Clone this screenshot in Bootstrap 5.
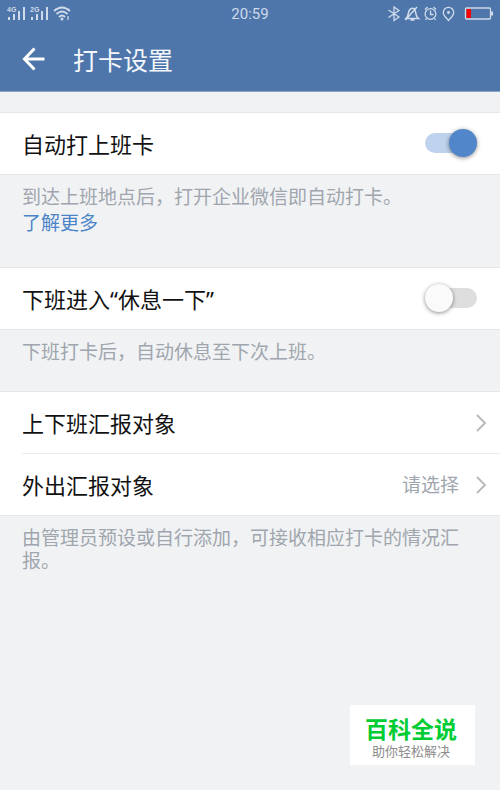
<!DOCTYPE html>
<html lang="zh-CN">
<head>
<meta charset="utf-8">
<meta name="viewport" content="width=device-width, initial-scale=1">
<title>打卡设置</title>
<link href="https://cdn.jsdelivr.net/npm/bootstrap@5.3.0/dist/css/bootstrap.min.css" rel="stylesheet">
<style>
body{background:#f1f2f4;font-family:"Noto Sans","Noto Sans CJK SC",sans-serif;color:#111;min-height:100vh}
.top-area{background:#4e76aa;border-bottom:1px solid #8ba4c6;color:#f4f7fb}
.status{height:26px;padding:0 6px;color:#cfdaea;font-family:Roboto,sans-serif;font-size:15px;line-height:28px}
.title-bar{height:65px;padding:0 22px;gap:26px}
.title-bar h1{font-size:25px;line-height:36px;font-weight:400;padding-top:2px}
.group{background:#fff;border:solid #e6e7e9;border-width:1px 0}
.setting{height:61px;padding:0 23px 0 22px;font-size:22px;line-height:32px;color:#111;text-decoration:none}
.setting-line{height:1px;background:#ececee;margin-left:22px}
.nav-row{padding-right:13px}
.hint{font-size:19px;line-height:23px;color:#a0a6ae;padding:11px 26px 0 22px}
.hint a{color:#4a84c8;line-height:29px;text-decoration:none}
.choice{font-size:19px;line-height:28px;color:#a0a6ae}
.toggle.form-check-input{width:52px;height:20px;margin:0 0 2px;border:0;border-radius:10px;background:#dedede none;position:relative}
.toggle.form-check-input:checked{background:#bfd3ee none}
.toggle::before{content:"";position:absolute;left:0;top:-4px;width:28px;height:28px;border-radius:50%;background:#fafafa;box-shadow:0 1px 4px rgba(0,0,0,.45)}
.toggle:checked::before{left:24px;background:#5186cb}
.gap-first{height:20px}
.block-a{height:92px}
.block-b{height:61px}
.brand-tag{right:25px;bottom:25px;width:125px;height:60px;background:#fff;padding-top:11px;padding-right:3px;font-family:"Liberation Sans","Noto Sans CJK SC",sans-serif}
.brand-name{font-size:23px;line-height:28px;font-weight:700;color:#0c3}
.brand-sub{font-size:13px;line-height:16px;color:#8c8c8c}
</style>
<script src="https://cdn.jsdelivr.net/npm/bootstrap@5.3.0/dist/js/bootstrap.bundle.min.js"></script>
</head>
<body class="position-relative">
<header class="top-area">
  <div class="status row g-0 align-items-center">
    <div class="col d-flex">
      <svg width="66" height="18" viewBox="0 0 66 18" fill="currentColor" aria-hidden="true">
        <text x="1" y="7" font-size="7" font-weight="700" font-family="Liberation Sans, sans-serif">4G</text>
        <text x="24" y="7" font-size="7" font-weight="700" font-family="Liberation Sans, sans-serif">2G</text>
        <path d="M2 12h2v3H2zM7 9h2v6H7zM12 6h2v9h-2zM17 2h2v13h-2zM25 12h2v3h-2zM30 9h2v6h-2zM35 6h2v9h-2zM40 2h2v13h-2z"/>
        <path d="M48 6Q56 -1 64 6M50.500 9Q56 4 61.500 9M53 12Q56 9 59 12" fill="none" stroke="currentColor" stroke-width="1.800"/>
        <circle cx="56" cy="14" r="1.500"/><path d="M61 11h2v4h-2z" opacity=".6"/>
      </svg>
    </div>
    <div class="col-auto">20:59</div>
    <div class="col d-flex justify-content-end">
      <svg width="108" height="18" viewBox="386 4 108 18" fill="none" stroke="currentColor" stroke-width="1.300" aria-hidden="true">
        <path d="M388.500 9l10.500 7-5 3.500V6l5 3.500-10.500 7"/>
        <path d="M406 17.500c2.500-2 2-6 3.500-8.500 1.500-2.500 4.500-2.500 5.500 0 1 2.500.5 6.500 3.500 8.500zM410.500 19h4M405.500 19L417 6" stroke-width="1.500"/>
        <circle cx="430.500" cy="13" r="5.400"/><path d="M430.500 9.500V13.500h3M425 8.500l2.500-2.500M436 8.500l-2.500-2.500M426.500 17.500l-1 1.500M434.500 17.500l1 1.500"/>
        <path d="M448.500 19.500c-2-2.500-5.200-4.500-5.200-8a5.200 5.200 0 0 1 10.400 0c0 3.500-3.200 5.500-5.200 8z"/><circle cx="448.500" cy="11.500" r=".8" fill="currentColor"/>
        <rect x="465.500" y="7" width="25" height="11" rx="1"/><path d="M491 10.500h2v4h-2" fill="currentColor" stroke="none"/>
        <path d="M466.500 8h4.500v9h-4.500z" fill="#f00" stroke="none"/>
      </svg>
    </div>
  </div>
  <div class="title-bar d-flex align-items-center">
    <button type="button" class="btn p-0 border-0 d-flex text-white" aria-label="返回">
      <svg width="25" height="24" viewBox="0 0 25 24" fill="none" stroke="currentColor" stroke-width="3" aria-hidden="true"><path d="M12.500 1.500L2.500 12l10 10.500M2.500 12h20"/></svg>
    </button>
    <h1 class="mb-0">打卡设置</h1>
  </div>
</header>
<main>
  <div class="gap-first"></div>
  <section class="group">
    <div class="setting d-flex align-items-center justify-content-between">
      <label for="auto-clock">自动打上班卡</label>
      <input class="form-check-input toggle" type="checkbox" role="switch" id="auto-clock" checked>
    </div>
  </section>
  <div class="hint block-a">到达上班地点后，打开企业微信即自动打卡。<br><a href="#more">了解更多</a></div>
  <section class="group">
    <div class="setting d-flex align-items-center justify-content-between">
      <label for="rest">下班进入“休息一下”</label>
      <input class="form-check-input toggle" type="checkbox" role="switch" id="rest">
    </div>
  </section>
  <div class="hint block-b">下班打卡后，自动休息至下次上班。</div>
  <section class="group">
    <a href="#report" class="setting nav-row d-flex align-items-center justify-content-between">
      <span>上下班汇报对象</span>
      <svg width="12" height="18" viewBox="0 0 12 18" fill="none" stroke="#b8b8b8" stroke-width="1.800" aria-hidden="true"><path d="M2 1l8 8-8 8"/></svg>
    </a>
    <div class="setting-line"></div>
    <a href="#outside" class="setting nav-row d-flex align-items-center">
      <span class="me-auto">外出汇报对象</span>
      <span class="choice me-3">请选择</span>
      <svg width="12" height="18" viewBox="0 0 12 18" fill="none" stroke="#b8b8b8" stroke-width="1.800" aria-hidden="true"><path d="M2 1l8 8-8 8"/></svg>
    </a>
  </section>
  <div class="hint">由管理员预设或自行添加，可接收相应打卡的情况汇报。</div>
</main>
<aside class="brand-tag position-absolute text-center">
  <div class="brand-name">百科全说</div>
  <div class="brand-sub">助你轻松解决</div>
</aside>
</body>
</html>
